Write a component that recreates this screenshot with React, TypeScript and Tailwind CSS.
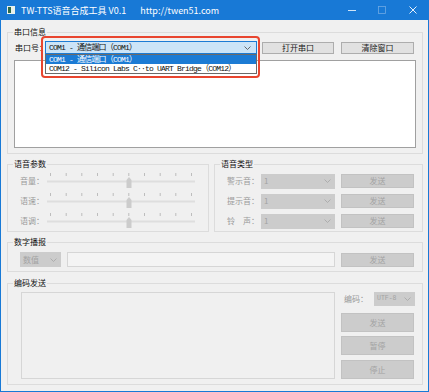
import React from 'react';

const cjk = "font-['Noto_Sans_CJK_SC',sans-serif]";
const mono = "font-['Liberation_Mono','Noto_Sans_CJK_SC',monospace] text-[8px] tracking-[-0.8px] leading-none";

const Chevron = ({ color }: { color: string }) => (
  <svg width="7" height="4" viewBox="0 0 7 4" className="flex-none">
    <polyline points="0.5,0.5 3.5,3.5 6.5,0.5" fill="none" stroke={color} strokeWidth="0.9" />
  </svg>
);

const Btn = ({
  label,
  className = '',
  disabled = true
}: {label: string;className?: string;disabled?: boolean;}) =>
<div
  className={`flex flex-none items-center justify-center border text-[8px] leading-none ${
  disabled ?
  'bg-[#cccccc] border-[#c2c2c2] text-[#a3a3a3]' :
  'bg-[#e1e1e1] border-[#adadad] text-[#1a1a1a]'} ${
  className}`}>

    {label}
  </div>;


const DCombo = ({ value, className = '' }: {value: string;className?: string;}) =>
<div className={`flex flex-none items-center justify-between bg-[#cccccc] pl-[3px] pr-[4px] text-[#a3a3a3] ${className}`}>
    <span className="text-[8px] leading-none">{value}</span>
    <Chevron color="#a9a9a9" />
  </div>;


const Group = ({
  title,
  className = '',
  children
}: {title: string;className?: string;children: React.ReactNode;}) =>
<fieldset className={`border border-[#dcdcdc] min-w-0 ${className}`}>
    <legend className="ml-[5px] px-[1px] text-[8px] leading-[10px] text-[#111]">{title}</legend>
    {children}
  </fieldset>;


const ticks = [4, 19.7, 35.3, 51, 66.7, 82.3, 98, 113.7, 129.3, 145];

const Slider = () =>
<svg width="150" height="20" className="flex-none">
    {ticks.map((x) =>
  <rect key={x} x={x} y="2" width="1" height="3" fill="#bdbdbd" />
  )}
    <rect x="1" y="9.5" width="148" height="2" fill="#dedede" />
    <polygon points="80.5,9 83,6 85.5,9 85.5,17 80.5,17" fill="#cccccc" />
  </svg>;


const SliderRow = ({ label }: {label: string;}) =>
<div className="flex h-[20px] items-start">
    <div className="ml-[12px] mt-[5px] w-[26px] flex-none whitespace-nowrap text-[8px] leading-[10px] text-[#9a9a9a]">{label}</div>
    <Slider />
  </div>;


const TypeRow = ({ label }: {label: string;}) =>
<div className="flex h-[20px] items-center">
    <div className="w-[44px] flex-none text-right text-[8px] leading-none text-[#9a9a9a]">{label}</div>
    <DCombo value="1" className="ml-[2px] h-[15px] w-[74px]" />
    <Btn label="发送" className="ml-[6px] h-[14px] w-[73px]" />
  </div>;


export default function App() {
  return (
    <div className={`flex h-[392px] w-[429px] flex-col border border-t-0 border-[#1879d6] bg-[#f0f0f0] ${cjk}`}>
      {/* title bar */}
      <div className="flex h-[20px] flex-none items-center bg-[#1879d6] text-white">
        <svg width="8" height="8" viewBox="0 0 8 8" className="ml-[6px] flex-none">
          <rect x="0" y="0" width="8" height="8" fill="#e8f1ec" />
          <rect x="1" y="1" width="3" height="6" fill="#2e6b4a" />
        </svg>
        <span className="ml-[6px] text-[9px] leading-none">TW-TTS语音合成工具 V0.1</span>
        <span className="ml-[14px] text-[9px] leading-none">http://twen51.com</span>
        <div className="ml-auto flex h-full items-center">
          <svg width="8" height="8" viewBox="0 0 8 8" className="mr-[22px]">
            <line x1="0" y1="4.5" x2="8" y2="4.5" stroke="#fff" strokeWidth="0.8" />
          </svg>
          <svg width="8" height="8" viewBox="0 0 8 8" className="mr-[23px]">
            <rect x="0.5" y="0.5" width="7" height="7" fill="none" stroke="#6ea9e4" strokeWidth="0.8" />
          </svg>
          <svg width="8" height="8" viewBox="0 0 8 8" className="mr-[11px]">
            <path d="M0.5 0.5 L7.5 7.5 M7.5 0.5 L0.5 7.5" stroke="#fff" strokeWidth="0.9" />
          </svg>
        </div>
      </div>

      <div className="flex flex-col pl-[6px] pr-[5px]">
        {/* 串口信息 */}
        <Group title="串口信息" className="mt-[7px]">
          <div className="pb-[5px] pt-[4px]">
            <div className="flex h-[13px] items-center">
              <div className="ml-[7px] w-[30px] flex-none whitespace-nowrap text-[8px] leading-none text-[#111]">串口号：</div>
              <div className="relative h-[13px] w-[212px] flex-none">
                <div className="flex h-full items-center justify-between border border-[#1c7bd4] bg-[#cce4f7] pl-[3px] pr-[5px] text-[#111]">
                  <span className={mono}>COM1 - 通信端口（COM1）</span>
                  <Chevron color="#5a5a5a" />
                </div>
                <div className="absolute left-0 top-[13px] w-[212px] border border-[#6a6a6a] bg-white">
                  <div className={`flex h-[9px] items-center bg-[#1c7bd4] pl-[3px] text-white ${mono}`}>
                    COM1 - 通信端口（COM1）
                  </div>
                  <div className={`flex h-[9px] items-center whitespace-nowrap pl-[3px] text-[#111] ${mono}`}>
                    COM12 - Silicon Labs C··to UART Bridge（COM12）
                  </div>
                </div>
                <div className="pointer-events-none absolute left-[-4px] top-[-5px] h-[42px] w-[219px] rounded-[4px] border-2 border-[#e8452f]" />
              </div>
              <Btn label="打开串口" disabled={false} className="ml-[5px] h-[12px] w-[72px]" />
              <Btn label="清除窗口" disabled={false} className="ml-[7px] h-[12px] w-[73px]" />
            </div>
            <div className="ml-[6px] mt-[6px] h-[88px] w-[402px] border border-[#a0a0a0] bg-white" />
          </div>
        </Group>

        {/* 语音参数 / 语音类型 */}
        <div className="mt-[5px] flex">
          <Group title="语音参数" className="w-[202px] flex-none">
            <div className="pt-[2px]">
              <SliderRow label="音量：" />
              <SliderRow label="语速：" />
              <SliderRow label="语调：" />
            </div>
          </Group>
          <Group title="语音类型" className="ml-[5px] flex-1">
            <div className="pt-[2px]">
              <TypeRow label="警示音：" />
              <TypeRow label="提示音：" />
              <TypeRow label="铃　声：" />
            </div>
          </Group>
        </div>

        {/* 数字播报 */}
        <Group title="数字播报" className="mt-[5px]">
          <div className="flex items-center pb-[4px] pt-[5px]">
            <DCombo value="数值" className="ml-[12px] h-[15px] w-[41px]" />
            <div className="ml-[6px] h-[15px] w-[268px] flex-none border border-[#d6d6d6] bg-[#f4f4f4]" />
            <Btn label="发送" className="ml-[6px] h-[14px] w-[73px]" />
          </div>
        </Group>

        {/* 编码发送 */}
        <Group title="编码发送" className="mt-[6px]">
          <div className="flex pb-[5px] pt-[4px]">
            <div className="ml-[13px] h-[87px] w-[314px] flex-none border border-[#d6d6d6] bg-[#f0f0f0]" />
            <div className="ml-[6px] flex w-[74px] flex-none flex-col">
              <div className="flex h-[14px] items-center">
                <span className="ml-[3px] w-[30px] flex-none text-[8px] leading-none text-[#9a9a9a]">编码：</span>
                <DCombo value="UTF-8" className="h-[14px] w-[41px] [&>span]:font-['Liberation_Mono',monospace] [&>span]:text-[6.5px]" />
              </div>
              <Btn label="发送" className="mt-[7px] h-[19px] w-[73px]" />
              <Btn label="暂停" className="mt-[4px] h-[19px] w-[73px]" />
              <Btn label="停止" className="mt-[5px] h-[19px] w-[73px]" />
            </div>
          </div>
        </Group>
      </div>
    </div>);

}
